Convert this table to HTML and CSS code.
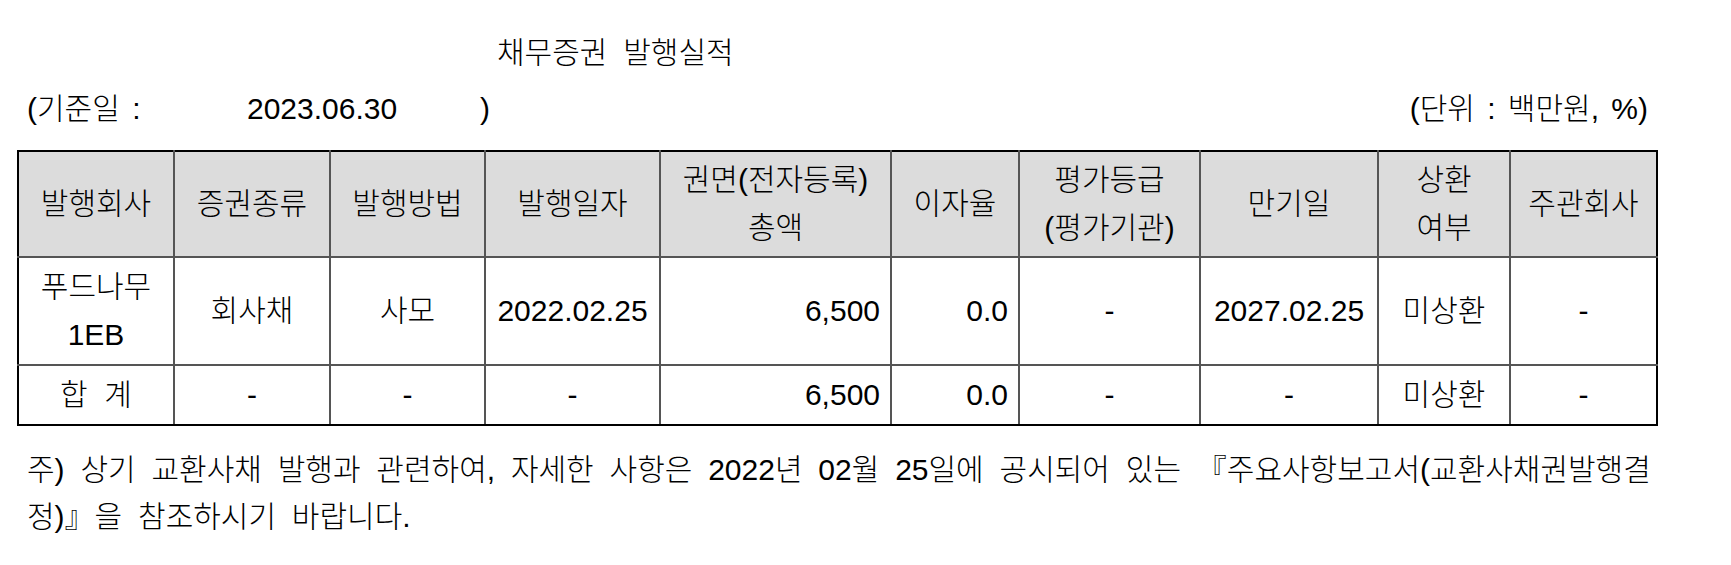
FILE: index.html
```html
<!DOCTYPE html>
<html lang="ko">
<head>
<meta charset="utf-8">
<title>채무증권 발행실적</title>
<link rel="stylesheet" href="styles.css">
</head>
<body>
<div class="page">
  <div class="title">채무증권 발행실적</div>
  <div class="info-row">
    <span class="base-label">(기준일 :</span>
    <span class="base-date">2023.06.30</span>
    <span class="base-close">)</span>
    <span class="unit">(단위 : 백만원, %)</span>
  </div>
  <table class="report">
    <colgroup>
      <col class="c1"><col class="c2"><col class="c3"><col class="c4"><col class="c5">
      <col class="c6"><col class="c7"><col class="c8"><col class="c9"><col class="c10">
    </colgroup>
    <thead>
      <tr>
        <th>발행회사</th>
        <th>증권종류</th>
        <th>발행방법</th>
        <th>발행일자</th>
        <th>권면(전자등록)<br>총액</th>
        <th>이자율</th>
        <th>평가등급<br>(평가기관)</th>
        <th>만기일</th>
        <th>상환<br>여부</th>
        <th>주관회사</th>
      </tr>
    </thead>
    <tbody>
      <tr>
        <td class="center">푸드나무<br>1EB</td>
        <td class="center">회사채</td>
        <td class="center">사모</td>
        <td class="center">2022.02.25</td>
        <td class="right">6,500</td>
        <td class="right">0.0</td>
        <td class="center">-</td>
        <td class="center">2027.02.25</td>
        <td class="center">미상환</td>
        <td class="center">-</td>
      </tr>
      <tr>
        <td class="center">합&nbsp;&nbsp;계</td>
        <td class="center">-</td>
        <td class="center">-</td>
        <td class="center">-</td>
        <td class="right">6,500</td>
        <td class="right">0.0</td>
        <td class="center">-</td>
        <td class="center">-</td>
        <td class="center">미상환</td>
        <td class="center">-</td>
      </tr>
    </tbody>
  </table>
  <div class="note">
    <span class="note-line">주) 상기 교환사채 발행과 관련하여, 자세한 사항은 2022년 02월 25일에 공시되어 있는 『주요사항보고서(교환사채권발행결</span>
    <span class="note-line">정)』을 참조하시기 바랍니다.</span>
  </div>
</div>
</body>
</html>
```

FILE: styles.css
```css
html, body {
  margin: 0;
  padding: 0;
  background: #ffffff;
}

body {
  font-family: "Liberation Sans", "Noto Sans CJK KR", sans-serif;
  font-size: 30px;
  font-weight: 300;
  color: #000000;
  word-spacing: 7.5px;
}

.page {
  width: 1641px;
  padding: 29px 0 0 17px;
}

.title {
  line-height: 48px;
  padding-left: 480px;
}

.info-row {
  display: flex;
  align-items: center;
  line-height: 48px;
  margin-top: 8px;
  padding: 0 10px;
}

.base-label {
  width: 220px;
  word-spacing: 4px;
}

.base-date {
  width: 233px;
}

.unit {
  margin-left: auto;
  word-spacing: 4px;
}

.report {
  margin-top: 17px;
  width: 1641px;
  table-layout: fixed;
  border-collapse: collapse;
  border: 2px solid #000;
}

.c1 { width: 156px; }
.c2 { width: 156px; }
.c3 { width: 155px; }
.c4 { width: 175px; }
.c5 { width: 231px; }
.c6 { width: 128px; }
.c7 { width: 181px; }
.c8 { width: 178px; }
.c9 { width: 132px; }
.c10 { width: 147px; }

.report th,
.report td {
  border: 2px solid #555555;
  padding: 5px 10px;
  line-height: 48px;
  font-weight: 300;
  vertical-align: middle;
  white-space: nowrap;
  word-spacing: 0;
}

.report th {
  background: #dcdcdc;
  text-align: center;
  padding: 4px 4px;
}

.report th:first-child,
.report td:first-child {
  border-left-color: #000;
}

.report th:last-child,
.report td:last-child {
  border-right-color: #000;
}

.report thead th {
  border-top-color: #000;
}

.report tbody tr:last-child td {
  border-bottom-color: #000;
}

.center {
  text-align: center;
}

.right {
  text-align: right;
}

.note {
  margin-top: 20px;
  padding-left: 10px;
  line-height: 47px;
}

.note-line {
  display: block;
  white-space: nowrap;
}
```
